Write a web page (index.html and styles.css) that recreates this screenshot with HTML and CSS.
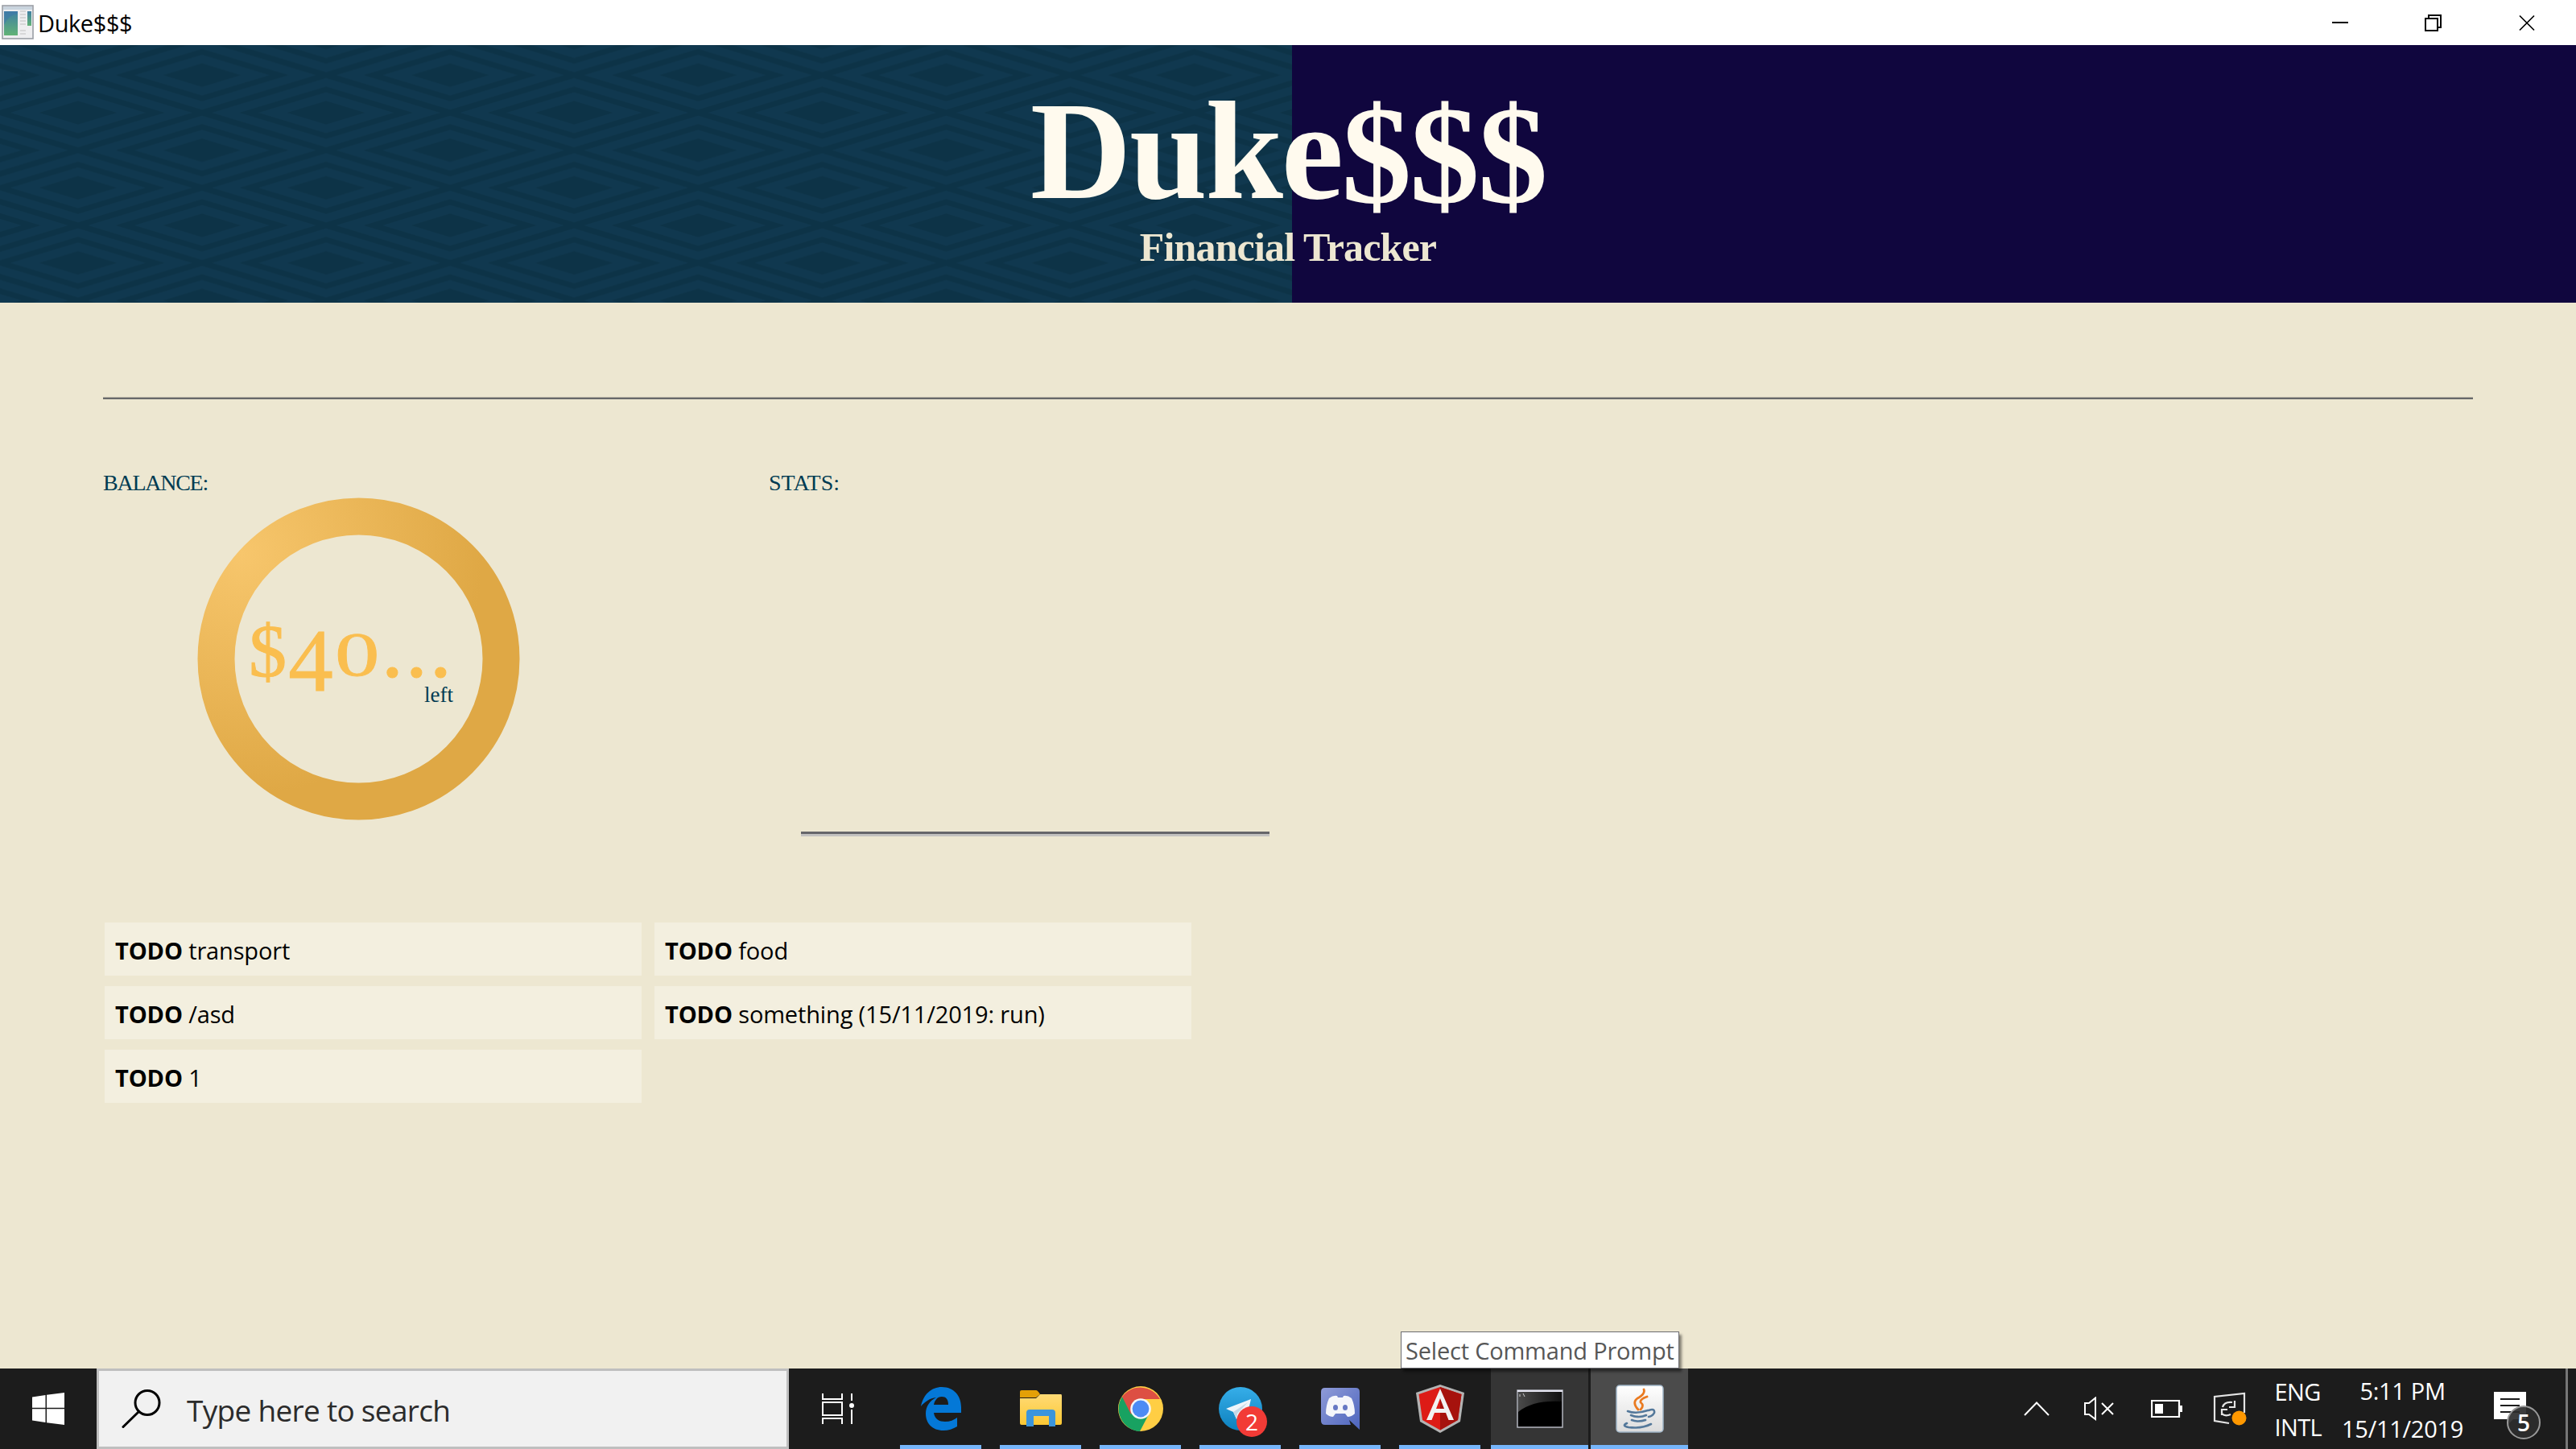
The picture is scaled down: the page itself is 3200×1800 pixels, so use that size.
FILE: index.html
```html
<!DOCTYPE html>
<html lang="en">
<head>
<meta charset="utf-8">
<title>Duke$$$</title>
<link rel="stylesheet" href="styles.css">
</head>
<body>
<header class="titlebar">
  <svg class="app-icon" width="40" height="44" viewBox="0 0 40 44">
    <defs><linearGradient id="app" x1="0" y1="0" x2="0" y2="1"><stop offset="0" stop-color="#3f7fa3"/><stop offset="1" stop-color="#62b376"/></linearGradient></defs>
    <rect x="1" y="1" width="38" height="41" fill="#eeeef0" stroke="#9a9ea5" stroke-width="1.6"/>
    <rect x="2" y="2" width="36" height="4" fill="#c9d4de"/>
    <rect x="3" y="8" width="17" height="30" fill="url(#app)"/>
    <path d="M3 25Q9 12 20 11V8H3z" fill="#3f78aa" opacity=".6"/>
    <path d="M23 8h7M23 12h7M23 16h7M23 20h7M23 24h7M23 32h7M23 36h7" stroke="#cfcfcf" stroke-width="1.3"/>
    <rect x="32" y="8" width="5" height="18" fill="url(#app)"/>
  </svg>
  <span class="window-title">Duke$$$</span>
  <svg class="window-controls" width="260" height="24" viewBox="0 0 260 24" fill="none" stroke="#000" stroke-width="2">
    <path d="M0 12h20M116 7h15v15h-15zM120 7V3h15v15h-4"/>
    <path d="M233 3.500l18 18M251 3.500l-18 18" stroke-width="1.700"/>
  </svg>
</header>

<section class="banner">
  <svg class="banner-pattern" width="1605" height="320">
    <defs>
      <pattern id="diamonds" width="308.160" height="93.300" patternUnits="userSpaceOnUse" patternTransform="translate(96.900 -9.300)">
        <rect width="309" height="94" fill="#0d3347"/>
        <g fill="none" stroke="#10384f">
          <g id="d"><path d="M88.080 46.650L154.080 26.650 220.080 46.650 154.080 66.650z" stroke-width="10.300"/>
          <path d="M29.500 46.650L154.080 8.900 278.660 46.650 154.080 84.400z" stroke-width="9.800"/></g>
          <use href="#d" x="-154.080" y="-46.650"/><use href="#d" x="154.080" y="-46.650"/>
          <use href="#d" x="-154.080" y="46.650"/><use href="#d" x="154.080" y="46.650"/>
        </g>
      </pattern>
    </defs>
    <rect width="1605" height="320" fill="url(#diamonds)"/>
  </svg>
  <div class="banner-text">
    <h1>Duke<span class="dollars">$$$</span></h1>
    <h2>Financial Tracker</h2>
  </div>
</section>

<main class="content">
  <hr class="divider">
  <div class="overview">
    <section class="balance">
      <h3>BALANCE:</h3>
      <div class="dial">
        <svg width="401" height="401" viewBox="0 0 401 401">
          <defs><radialGradient id="gold" gradientUnits="userSpaceOnUse" cx="55" cy="70" r="300"><stop offset="0" stop-color="#f7c66c"/><stop offset="1" stop-color="#dfa845"/></radialGradient></defs>
          <circle cx="200.500" cy="200.500" r="177" fill="none" stroke="url(#gold)" stroke-width="46"/>
        </svg>
        <div class="dial-text">
          <div class="amount"><span class="currency">$</span><span class="low">4</span><span class="short">0</span>...</div>
          <div class="left">left</div>
        </div>
      </div>
    </section>
    <section class="stats">
      <h3>STATS:</h3>
      <div class="axis"></div>
    </section>
  </div>
  <div class="tasks">
    <div class="task"><b>TODO</b> transport</div>
    <div class="task"><b>TODO</b> food</div>
    <div class="task"><b>TODO</b> /asd</div>
    <div class="task"><b>TODO</b> something (15/11/2019: run)</div>
    <div class="task"><b>TODO</b> 1</div>
  </div>
</main>

<footer class="taskbar">
  <div class="start">
    <svg width="40" height="40" viewBox="0 0 40 40" fill="#fff"><path d="M0 5.500L16.500 3V18.800H0zM18 2.800L40 0V18.800H18zM0 20.200H16.500V37L0 34.500zM18 20.200H40V40L18 37.200z"/></svg>
  </div>
  <div class="search">
    <svg width="50" height="50" viewBox="0 0 50 50" fill="none" stroke="#000" stroke-width="3" stroke-linecap="round"><circle cx="32" cy="17.500" r="15"/><path d="M21.500 28.500L2 47.500"/></svg>
    <span>Type here to search</span>
  </div>
  <div class="apps">
    <div class="app plain">
      <svg width="42" height="40" viewBox="0 0 42 40" fill="none" stroke="#fff" stroke-width="2"><path d="M2 1V8H26V1M2 12H26V28H2zM2 39V32H26V39M38 1v9M38 21v18"/><circle cx="38" cy="16" r="3" fill="#fff" stroke="none"/></svg>
    </div>
    <div class="app">
      <svg width="50" height="54" viewBox="0 0 50 54"><path d="M0 24C3 9 13 0 26 0c15 0 24 11 24 25v7H16c1 8 7 11 14 11 6 0 11-2 15-5v11c-5 3-11 5-17 5C14 54 6 45 6 33c0-9 5-16 13-20C11 14 5 18 0 24zM16 22h18c0-7-3-10-8-10-6 0-9 5-10 10z" fill="#0478d7"/></svg>
    </div>
    <div class="app">
      <svg width="54" height="46" viewBox="0 0 54 46"><defs><linearGradient id="fold" x1="0" y1="0" x2="0" y2="1"><stop offset="0" stop-color="#ffda75"/><stop offset="1" stop-color="#fbc834"/></linearGradient></defs><path d="M1 10H21L26 5H52q1 0 1 2V41q0 2-2 2H3q-2 0-2-2z" fill="url(#fold)"/><path d="M1 2q0-2 2-2h18q2 0 5 5l-5 4H1z" fill="#e3a006"/><path d="M9 45V28q0-4 4-4H41q4 0 4 4V45H37V32H18V45z" fill="#3b95dc"/></svg>
    </div>
    <div class="app">
      <svg width="56" height="56" viewBox="0 0 56 56"><circle cx="28" cy="28" r="28" fill="#ffce44"/><path d="M28 28L5 13A28 28 0 0 0 27 56L38 35z" fill="#18a261"/><path d="M5 13A28 28 0 0 1 52 16H28L16 35z" fill="#dd4f43"/><circle cx="28" cy="28" r="12.800" fill="#f4f6f8"/><circle cx="28" cy="28" r="10.400" fill="#4c8bf5"/></svg>
    </div>
    <div class="app">
      <svg width="54" height="54" viewBox="0 0 54 54"><defs><linearGradient id="tg" x1="0" y1="0" x2="0" y2="1"><stop offset="0" stop-color="#36aee9"/><stop offset="1" stop-color="#0d80bd"/></linearGradient></defs><circle cx="27" cy="27" r="27" fill="url(#tg)"/><path d="M9 27L40 15 34 41 26 35 22 40 18 31z" fill="#eef5fa"/><path d="M18 31L36 19 23 33 22 40z" fill="#c3d8e8"/></svg>
      <span class="badge">2</span>
    </div>
    <div class="app">
      <svg width="48" height="60" viewBox="0 -4 48 60"><defs><linearGradient id="dc" x1="0" y1="0" x2="1" y2="1"><stop offset="0" stop-color="#8f9bd8"/><stop offset="1" stop-color="#4c64bd"/></linearGradient></defs><path d="M5 0H43q5 0 5 5V52L35 40l2 6H5q-5 0-5-5V5q0-5 5-5z" fill="url(#dc)"/><path d="M10 13q5-4 10-3l1 2h6l1-2q5-1 10 3 4 9 4 19-4 4-9 4l-3-4H18l-3 4q-5 0-9-4 0-10 4-19z" fill="#f5f6fb"/><ellipse cx="18" cy="24.500" rx="3" ry="3.500" fill="#6678c4"/><ellipse cx="30" cy="24.500" rx="3" ry="3.500" fill="#6678c4"/></svg>
    </div>
    <div class="app">
      <svg width="60" height="60" viewBox="0 0 60 60"><path d="M30 0L60 10 55 46 30 60 5 46 0 10z" fill="#b3b3b3"/><path d="M30 3L56.500 12 52 44 30 56.500 8 44 3.500 12z" fill="#dd1b16"/><path d="M30 3L56.500 12 52 44 30 56.500z" fill="#a6120d"/><path d="M30 5L47 44H40.500L37 35H23L19.500 44H13zM30 17L25 30H35z" fill="#f2f2f2" fill-rule="evenodd"/></svg>
    </div>
    <div class="app open">
      <svg width="58" height="48" viewBox="0 0 58 48"><defs><linearGradient id="cmd" x1="0" y1="0" x2="1" y2="0"><stop offset="0" stop-color="#4a4a4a"/><stop offset="1" stop-color="#111"/></linearGradient></defs><rect x="1" y="1" width="56" height="46" fill="#000" stroke="#b4b6c0" stroke-width="1.500"/><path d="M2 3H56V15Q20 13 2 28z" fill="url(#cmd)"/><path d="M1 1H57V3H1z" fill="#e6e6f2"/><path d="M4 6v3M8 5l2 4" stroke="#ccc" stroke-width="1"/></svg>
    </div>
    <div class="app open active">
      <svg width="60" height="60" viewBox="0 0 60 60"><defs><linearGradient id="jv" x1="0" y1="0" x2="0" y2="1"><stop offset="0" stop-color="#fff"/><stop offset="1" stop-color="#dcdcdc"/></linearGradient></defs><rect x="1" y="1" width="58" height="58" rx="4" fill="url(#jv)" stroke="#9fb4c6" stroke-width="1.500"/><g fill="none" stroke-linecap="round"><path d="M35 6Q37 11 29 16 19 21 28 31M39 15Q30 18 31 22 36 26 31 31" stroke="#ea7a20" stroke-width="2.800"/><path d="M15 33Q25 37 40 32M19 38Q29 42 38 38M20 44Q28 47 37 44M41 32Q49 29 48 35 46 39 41 40M14 48Q7 51 16 53 32 55 44 49" stroke="#54789a" stroke-width="2.600"/></g></svg>
    </div>
  </div>
  <div class="tray">
    <svg class="chevron" width="32" height="18" viewBox="0 0 32 18" fill="none" stroke="#fff" stroke-width="2"><path d="M1 17L16 1.500 31 17"/></svg>
    <svg class="sound" width="38" height="30" viewBox="0 0 38 30" fill="none" stroke="#fff" stroke-width="2"><path d="M1 8H6L14 1.500V28L6 22H1zM22 8L36 22M36 8L22 22"/></svg>
    <svg class="battery" width="39" height="24" viewBox="0 0 39 24"><path d="M1 2H35V22H1z" fill="none" stroke="#fff" stroke-width="2.200"/><path d="M5 6H15V18H5zM35 8H39V16H35z" fill="#fff"/></svg>
    <svg class="update" width="42" height="42" viewBox="0 0 42 42" fill="none" stroke="#e4e4e4" stroke-width="2.200"><path d="M20 39L2 36V6L39 2V26"/><path d="M12 19Q14 12 24 13M27 11V19H20M11 29V22H18M11 27Q15 31 22 28"/><circle cx="32.500" cy="32.500" r="9" fill="#ff9800" stroke="none"/></svg>
    <div class="lang"><span>ENG</span><span>INTL</span></div>
    <div class="clock"><span>5:11 PM</span><span>15/11/2019</span></div>
    <div class="notes">
      <svg width="40" height="42" viewBox="0 0 40 42"><path d="M0 0H40V34H24L18 40V34H0z" fill="#fff"/><path d="M8 9H32M8 17H32M8 25H32" stroke="#1c1c1c" stroke-width="2"/></svg>
      <span class="count">5</span>
    </div>
    <div class="peek"></div>
  </div>
  <div class="tooltip">Select Command Prompt</div>
</footer>
</body>
</html>
```
FILE: styles.css
```css
* { box-sizing: border-box; }
body {
  margin: 0;
  width: 3200px;
  height: 1800px;
  overflow: hidden;
  display: flex;
  flex-direction: column;
  background: #ede7d1;
  font-family: "Open Sans", "Noto Sans", sans-serif;
  color: #000;
}
h1, h2, h3 { margin: 0; }
svg { display: block; flex: none; }

.titlebar { height: 56px; flex: none; display: flex; align-items: center; background: #fff; padding: 0 0 1px 2px; }
.window-title { font-size: 29px; margin-left: 5px; letter-spacing: -0.4px; white-space: nowrap; padding-top: 2px; }
.window-controls { margin-left: auto; margin-right: 43px; }

.banner { height: 320px; flex: none; display: grid; background: #10063e; overflow: hidden; }
.banner-pattern, .banner-text { grid-area: 1 / 1; }
.banner-text { z-index: 1; display: flex; flex-direction: column; align-items: center; font-family: "Liberation Serif", serif; }
.banner-text h1 { font-size: 174px; line-height: 200px; padding-top: 32px; color: #fffaee; letter-spacing: -2.4px; font-weight: 700; }
.dollars { display: inline-block; transform: translateY(5px); }
.banner-text h2 { font-size: 50px; line-height: 60px; margin-top: -11px; color: #ede7d1; font-weight: 700; letter-spacing: -0.85px; }

.content { flex: 1; padding: 118px 128px 0; }
.divider { margin: 0; border: 0; height: 2px; background: #68696a; box-shadow: 0 -1px #b8b4a6; }
.overview { display: flex; height: 650px; padding-top: 87px; }
.overview h3 { font: 400 28px/34px "Liberation Serif", serif; color: #003b52; }
.balance { width: 827px; }
.balance h3 { letter-spacing: -1.25px; }
.dial { display: grid; width: 401px; margin: 1px 0 0 117px; }
.dial > * { grid-area: 1 / 1; }
.dial-text { font-family: "Liberation Serif", serif; padding: 125px 0 0 64px; }
.amount { height: 105px; font-size: 111px; line-height: 120px; color: #fabe4f; display: flex; letter-spacing: 2.2px; -webkit-text-stroke: 1px #fabe4f; }
.currency { font-size: 94px; line-height: 130px; }
.low { transform: translateY(18px); }
.short { transform: scaleY(0.7); transform-origin: 50% 93px; }
.left { width: 254px; text-align: right; font-size: 27px; line-height: 30px; color: #003b52; }
.stats { width: 700px; }
.axis { width: 582px; height: 3px; margin: 416px 0 0 40px; background: #66666a; box-shadow: 0 3px #c3c2c0; }

.tasks { display: grid; grid-template-columns: 667px 667px; grid-auto-rows: 66px; gap: 13px 16px; padding-left: 2px; }
.task { background: #f3efdf; padding-left: 13px; font-size: 29px; line-height: 69px; white-space: nowrap; letter-spacing: -0.15px; }

.taskbar { position: relative; height: 100px; flex: none; display: flex; background: #1c1c1c; color: #fff; }
.start { width: 120px; display: grid; place-items: center; }
.search { width: 860px; display: flex; align-items: center; gap: 31px; padding-left: 28px; border: 3px solid #bfbfbf; background: #f1f1f1; color: #2b2b2b; }
.search span { font-size: 37px; letter-spacing: -0.7px; padding-top: 3px; }
.apps { display: flex; gap: 3px; }
.app { position: relative; width: 121px; display: grid; place-items: center; }
.app::after { content: ""; position: absolute; bottom: 0; left: 10px; right: 10px; height: 5px; background: #76b5fb; }
.app.plain { width: 125px; padding-right: 4px; }
.app.plain::after { display: none; }
.app.open { background: #353535; }
.app.active { background: #4b4b4b; }
.app.open::after { left: 0; right: 0; }
.badge { position: absolute; left: 56px; top: 47px; width: 38px; height: 38px; border-radius: 50%; background: #f23b36; font-size: 28px; line-height: 38px; text-align: center; }

.tray { margin-left: auto; display: flex; align-items: center; white-space: nowrap; }
.chevron { margin-right: 43px; }
.sound { margin-right: 45px; }
.battery { margin-right: 38px; }
.update { margin-right: 34px; }
.lang, .clock { display: flex; flex-direction: column; font-size: 29px; line-height: 44px; letter-spacing: -0.6px; padding-top: 2px; }
.clock { align-items: center; line-height: 47px; letter-spacing: -0.3px; }
.lang { margin-right: 25px; }
.notes { position: relative; margin: 0 49px 0 38px; }
.count { position: absolute; left: 16px; top: 17px; width: 42px; height: 42px; border-radius: 50%; border: 2px solid #999; background: rgba(44, 44, 44, .92); text-align: center; font-size: 28px; line-height: 38px; font-weight: 600; }
.peek { width: 13px; height: 100px; border-left: 3px solid #777; }
.tooltip { position: absolute; left: 1740px; top: -46px; width: 346px; height: 46px; background: #fff; border: 1px solid #6b6b70; box-shadow: 3px 4px 3px rgba(0, 0, 0, .45); color: #575757; font-size: 29px; line-height: 46px; padding-left: 5px; white-space: nowrap; letter-spacing: -0.2px; }
```
